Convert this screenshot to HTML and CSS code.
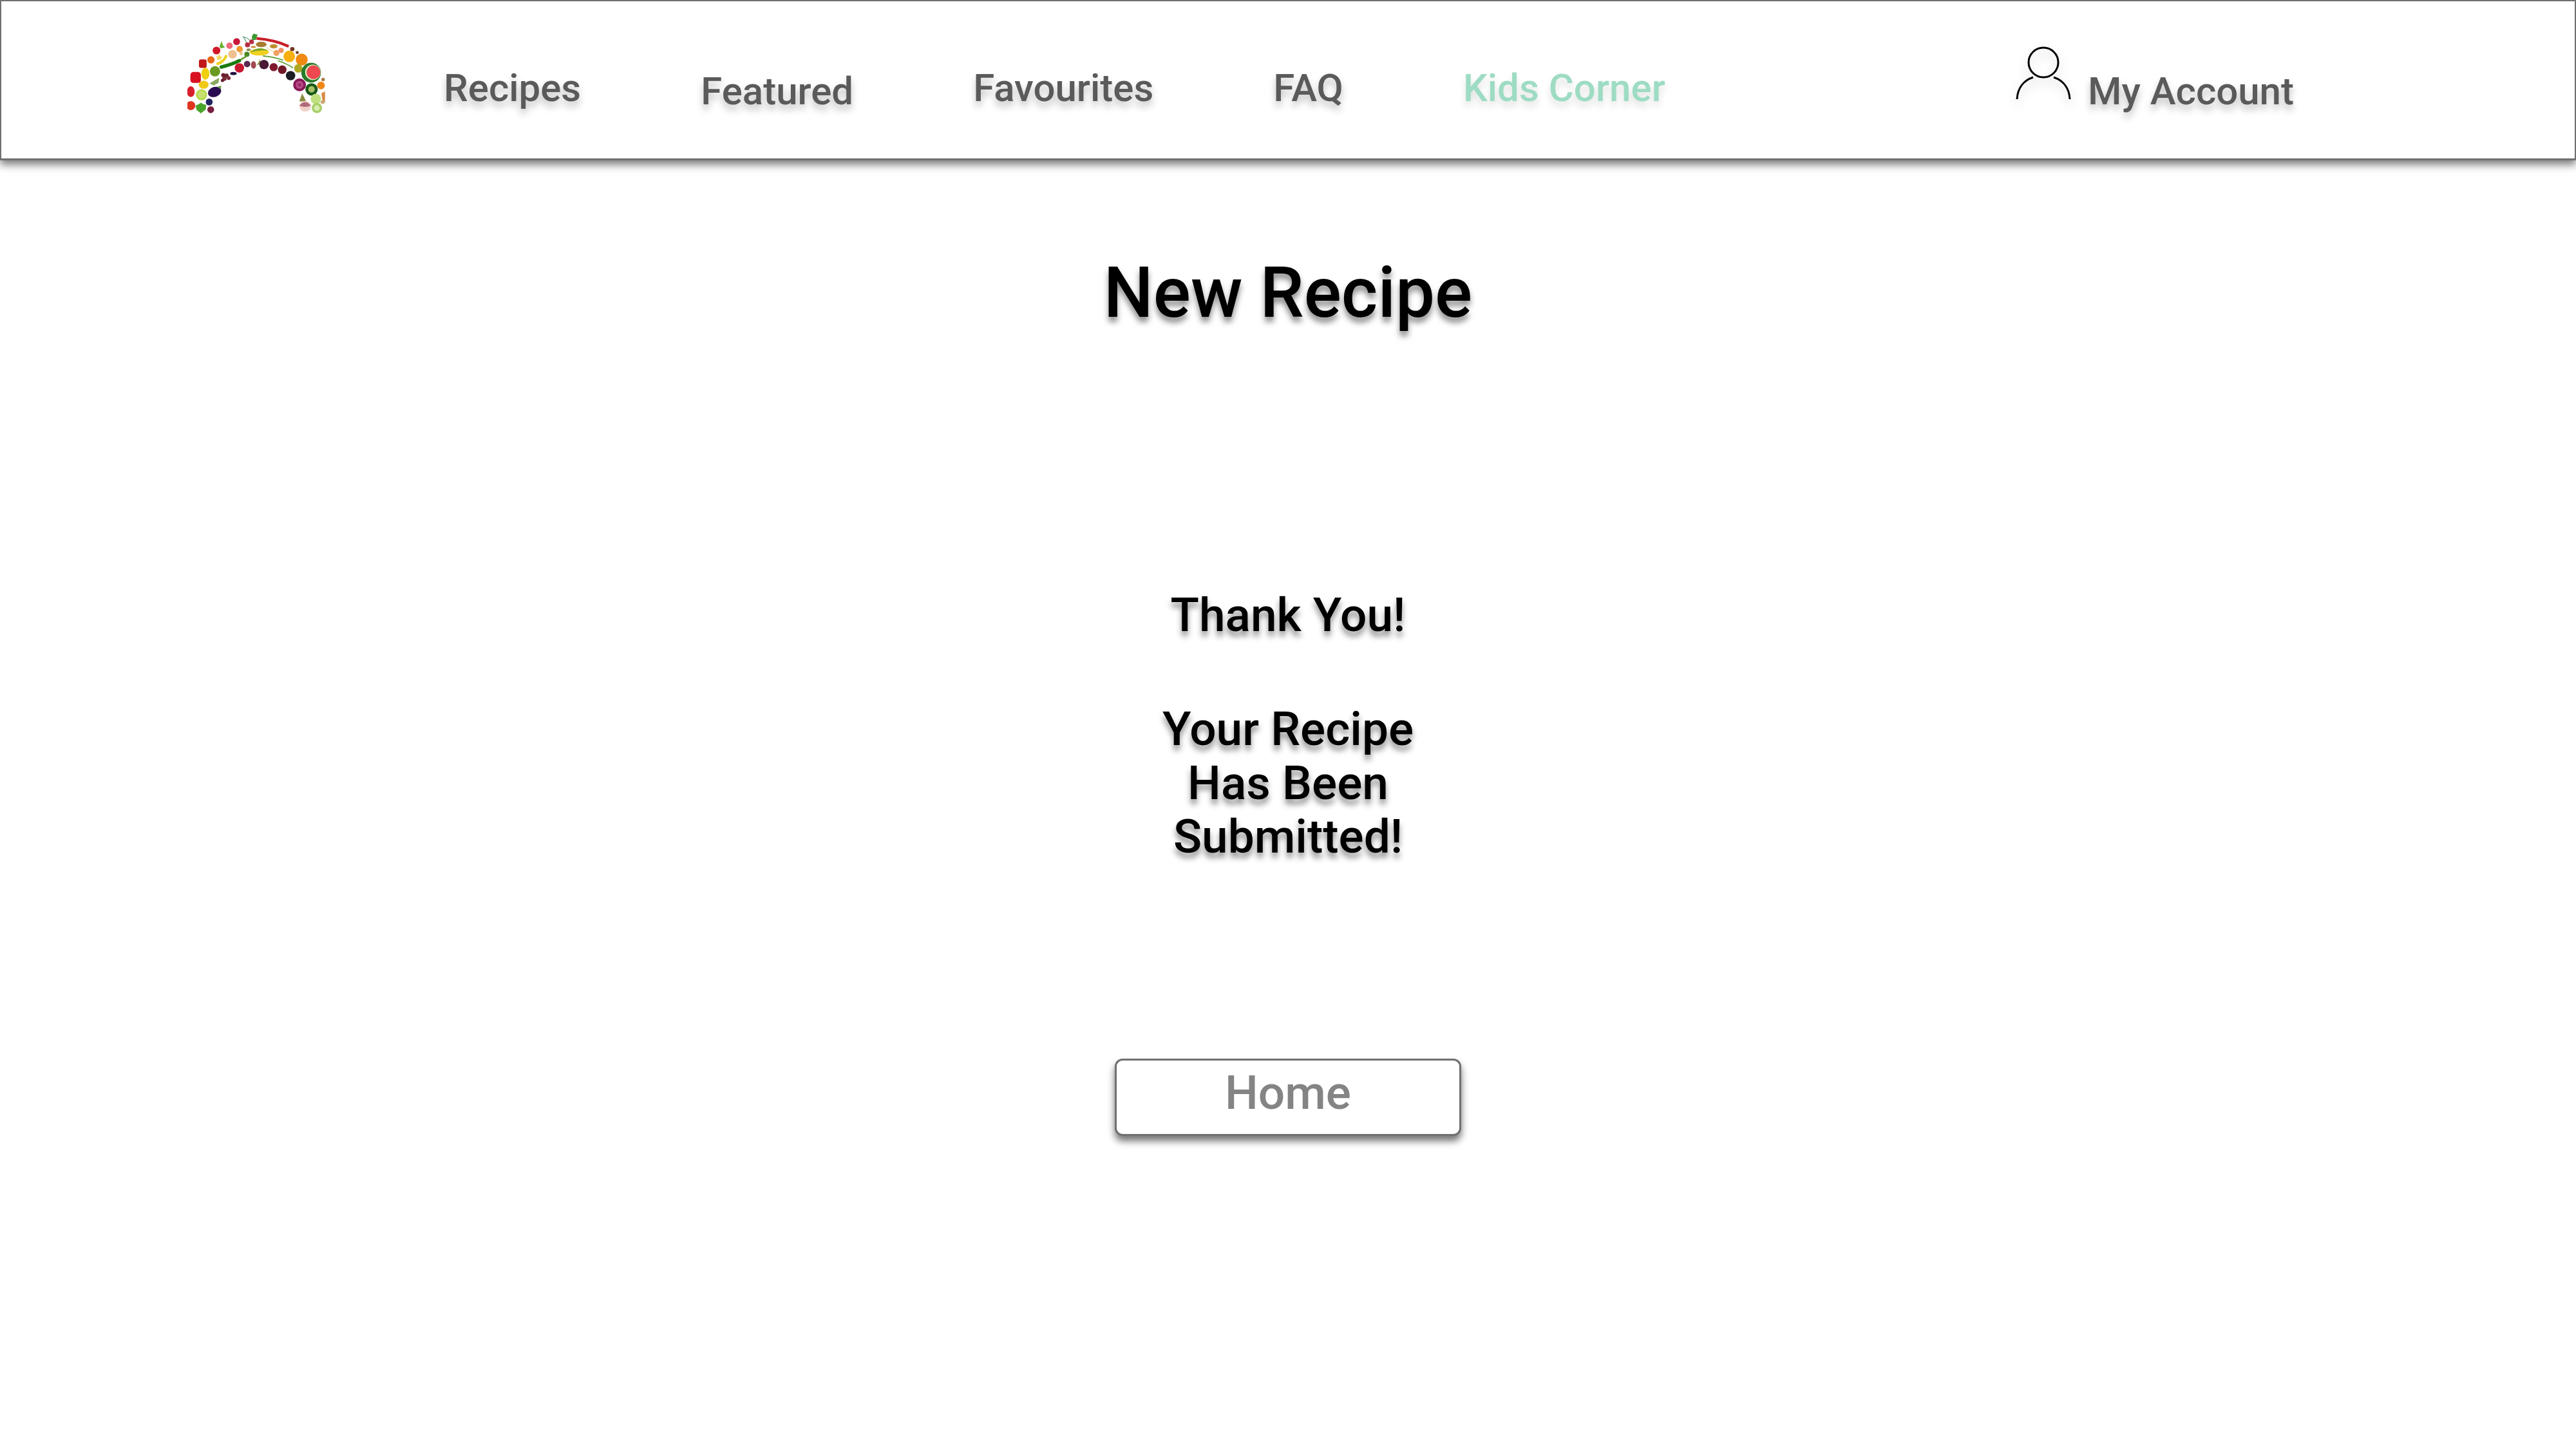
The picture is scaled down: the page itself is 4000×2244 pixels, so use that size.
FILE: index.html
```html
<!DOCTYPE html>
<html lang="en">
<head>
    <meta charset="UTF-8">
    <title>New Recipe</title>
    <link rel="stylesheet" href="styles.css">
</head>
<body>
    <header class="top-bar">
        <a class="logo" href="#">
            <svg class="logo-art" viewBox="153 95 642 373" width="214" height="124">
                <!-- left leg -->
                <ellipse cx="168" cy="367" rx="18" ry="25" fill="#d8202a"/>
                <circle cx="168" cy="432" r="21" fill="#e0351f"/>
                <path d="M190 432 L205 425 L215 418 L228 426 L240 428 L238 450 L215 468 L195 452Z" fill="#4aa52a"/>
                <circle cx="254" cy="415" r="16" fill="#1f2260"/>
                <circle cx="261" cy="451" r="16" fill="#7a2040"/>
                <circle cx="218" cy="381" r="26" fill="#b4d84a"/>
                <circle cx="218" cy="381" r="18" fill="#c8e070"/>
                <ellipse cx="279" cy="368" rx="32" ry="23" transform="rotate(-20 279 368)" fill="#2a0a50"/>
                <path d="M290 345 L310 338 L308 355 Z" fill="#6a9a40"/>
                <ellipse cx="228" cy="334" rx="23" ry="19" fill="#f0c818"/>
                <path d="M255 328 L300 302 L298 325 L275 338Z" fill="#8aa860"/>
                <rect x="166" y="275" width="49" height="51" rx="14" fill="#d81020"/>
                <ellipse cx="236" cy="283" rx="19" ry="28" fill="#f0d010"/>
                <circle cx="281" cy="272" r="24" fill="#6a9a20"/>
                <rect x="206" y="216" width="36" height="40" rx="10" fill="#c01818"/>
                <circle cx="262" cy="218" r="17" fill="#e86a18"/>
                <path d="M300 190 L306 202 L318 204 L308 212 L310 222 L300 216 L289 220 L292 210 L284 202 L295 202Z" fill="#f0d860"/>
                <path d="M288 238 Q320 232 335 197" fill="none" stroke="#f0d020" stroke-width="12"/>
                <circle cx="288" cy="175" r="18" fill="#d01828"/>
                <path d="M302 155 L312 130 L318 150 L328 160 L308 165Z" fill="#6ab030"/>
                <circle cx="349" cy="152" r="15" fill="#f06878"/>
                <circle cx="382" cy="133" r="16" fill="#c81838"/>
                <circle cx="363" cy="192" r="20" fill="#f0c090"/>
                <path d="M310 252 Q360 240 395 222" fill="none" stroke="#1a7a10" stroke-width="16" stroke-linecap="round"/>
                <!-- grapes -->
                <circle cx="320" cy="290" r="10" fill="#6a2030"/>
                <circle cx="335" cy="292" r="10" fill="#6a2030"/>
                <circle cx="345" cy="303" r="9" fill="#7a2a38"/>
                <circle cx="325" cy="306" r="10" fill="#7a2a38"/>
                <circle cx="316" cy="314" r="8" fill="#6a2030"/>
                <ellipse cx="367" cy="282" rx="15" ry="7" fill="#201040"/>
                <!-- top of the arch -->
                <circle cx="395" cy="256" r="22" fill="#c81830"/>
                <circle cx="431" cy="238" r="15" fill="#5a2a50"/>
                <ellipse cx="461" cy="242" rx="12" ry="18" fill="#a04a50"/>
                <path d="M476 245 L492 215 L495 235Z" fill="#8a9a40"/>
                <circle cx="510" cy="240" r="22" fill="#4a1838"/>
                <circle cx="555" cy="252" r="19" fill="#801830"/>
                <circle cx="595" cy="264" r="20" fill="#701828"/>
                <circle cx="634" cy="292" r="22" fill="#1c1c24"/>
                <path d="M410 110 Q435 115 445 128 M415 112 L433 145" fill="none" stroke="#2a7a50" stroke-width="3"/>
                <circle cx="433" cy="148" r="12" fill="#b83040"/>
                <circle cx="452" cy="134" r="11" fill="#b83040"/>
                <path d="M453 110 L460 96 L480 100 L472 125 L455 125Z" fill="#3a9a30"/>
                <path d="M475 118 Q560 125 625 155" fill="none" stroke="#c82028" stroke-width="13"/>
                <ellipse cx="497" cy="146" rx="25" ry="13" fill="#a87a30"/>
                <ellipse cx="555" cy="155" rx="18" ry="10" fill="#c09030"/>
                <ellipse cx="460" cy="158" rx="12" ry="5" fill="#d09040"/>
                <circle cx="396" cy="168" r="15" fill="#f09830"/>
                <circle cx="403" cy="188" r="8" fill="#e8c890"/>
                <ellipse cx="438" cy="171" rx="10" ry="6" fill="#8a8a50"/>
                <circle cx="568" cy="186" r="14" fill="#f0a060"/>
                <circle cx="590" cy="174" r="12" fill="#f09060"/>
                <ellipse cx="488" cy="182" rx="45" ry="16" fill="#f0d020"/>
                <path d="M445 182 Q490 150 530 175 Q490 172 445 182Z" fill="#7aa828"/>
                <circle cx="430" cy="192" r="12" fill="#4a8a20"/>
                <path d="M400 218 L430 200" stroke="#6a9a30" stroke-width="8"/>
                <path d="M520 160 L555 180" stroke="#f0e0c0" stroke-width="6"/>
                <path d="M505 200 Q560 205 600 220 M575 222 Q615 235 645 255" fill="none" stroke="#5a9a30" stroke-width="5"/>
                <!-- right leg -->
                <circle cx="628" cy="202" r="27" fill="#f8b010"/>
                <circle cx="686" cy="217" r="28" fill="#f08a10"/>
                <circle cx="642" cy="168" r="10" fill="#703820"/>
                <circle cx="665" cy="184" r="7" fill="#703820"/>
                <ellipse cx="670" cy="258" rx="19" ry="20" fill="#b0a820"/>
                <circle cx="730" cy="278" r="46" fill="#2a7a28"/>
                <circle cx="738" cy="276" r="36" fill="#d8ecc0"/>
                <circle cx="741" cy="276" r="32" fill="#f04850"/>
                <circle cx="676" cy="335" r="30" fill="#8a1858"/>
                <circle cx="676" cy="335" r="18" fill="#b85088"/>
                <circle cx="676" cy="335" r="9" fill="#a02a70"/>
                <circle cx="732" cy="356" r="29" fill="#1a5a18"/>
                <circle cx="732" cy="356" r="15" fill="#a8c068"/>
                <circle cx="776" cy="338" r="18" fill="#f08818"/>
                <circle cx="786" cy="310" r="8" fill="#a87a40"/>
                <circle cx="752" cy="401" r="24" fill="#c0e080"/>
                <circle cx="757" cy="443" r="24" fill="#a8d068"/>
                <circle cx="757" cy="443" r="13" fill="#d8ecb0"/>
                <path d="M778 375 L795 365 L795 415 L785 420Z" fill="#d88a40"/>
                <ellipse cx="784" cy="415" rx="10" ry="8" fill="#c8a878"/>
                <path d="M675 412 L688 375 L707 412Z" fill="#8a8a40"/>
                <ellipse cx="702" cy="435" rx="27" ry="25" fill="#f0d0c8"/>
                <path d="M675 432 Q702 400 729 432 Q702 444 675 432Z" fill="#b06878"/>
            </svg>
        </a>
        <nav class="main-nav">
            <a class="nav-link" href="#">Recipes</a>
            <a class="nav-link nav-link-low" href="#">Featured</a>
            <a class="nav-link" href="#">Favourites</a>
            <a class="nav-link" href="#">FAQ</a>
            <a class="nav-link nav-link-kids" href="#">Kids Corner</a>
        </nav>
        <a class="account" href="#">
            <svg class="account-icon" viewBox="0 0 86 86" width="86" height="86">
                <circle cx="43" cy="25" r="23" fill="none" stroke="#000" stroke-width="3"/>
                <path d="M27 48 C12 53 3 65 2 82" fill="none" stroke="#000" stroke-width="3"/>
                <path d="M59 48 C74 53 83 65 84 82" fill="none" stroke="#000" stroke-width="3"/>
            </svg>
            <span class="nav-link account-label">My Account</span>
        </a>
    </header>

    <main class="content">
        <h1 class="page-title">New Recipe</h1>
        <div class="message">
            <p class="message-head">Thank You!</p>
            <p class="message-body">Your Recipe<br>Has Been<br>Submitted!</p>
        </div>
        <button class="home-button" type="button">Home</button>
    </main>
</body>
</html>
```

FILE: styles.css
```css
html, body {
    margin: 0;
    background-color: #fff;
    font-family: 'Roboto', 'Liberation Sans', sans-serif;
}
body {
    min-height: 100vh;
}
a {
    text-decoration: none;
}
.top-bar {
    display: flex;
    align-items: flex-start;
    box-sizing: border-box;
    height: 249px;
    padding-left: 289px;
    padding-right: 436px;
    background-color: #fff;
    border: 2px solid #707070;
    border-bottom-width: 3px;
    box-shadow: 0 7px 12px rgba(0, 0, 0, 0.5);
}
.logo {
    display: block;
    margin-top: 50px;
    margin-right: 184px;
    height: 124px;
}
.logo-art {
    display: block;
}
.main-nav {
    display: flex;
    align-items: flex-start;
    gap: 186px;
    padding-top: 99px;
}
.nav-link {
    display: block;
    font-size: 60px;
    font-weight: 500;
    line-height: 72px;
    color: #5a5a5a;
    text-shadow: 0 8px 12px rgba(0, 0, 0, 0.25);
}
.nav-link-low {
    padding-top: 5px;
}
.nav-link-kids {
    color: #9ddcc3;
    text-shadow: 0 8px 12px rgba(0, 0, 0, 0.13);
}
.account {
    display: flex;
    align-items: flex-start;
    gap: 26px;
    margin-left: auto;
    padding-top: 70px;
}
.account-icon {
    display: block;
    filter: drop-shadow(0 8px 8px rgba(0, 0, 0, 0.2));
}
.account-label {
    padding-top: 34px;
}
.content {
    display: flex;
    flex-direction: column;
    align-items: center;
}
.page-title {
    margin: 143px 0 0;
    font-size: 108.5px;
    font-weight: 500;
    line-height: 126px;
    color: #000;
    text-shadow: 0 8px 10px rgba(0, 0, 0, 0.45);
}
.message {
    margin-top: 396px;
    text-align: center;
    font-size: 73px;
    font-weight: 500;
    line-height: 83.5px;
    color: #000;
    text-shadow: 0 8px 10px rgba(0, 0, 0, 0.45);
}
.message p {
    margin: 0;
}
.message-body {
    padding-top: 93.5px;
}
.home-button {
    display: block;
    box-sizing: border-box;
    width: 538px;
    height: 120px;
    margin-top: 302px;
    padding: 0 0 14px;
    font-family: inherit;
    font-size: 73px;
    font-weight: 500;
    line-height: 86px;
    color: #848484;
    text-align: center;
    background-color: #fff;
    border: 3px solid #707070;
    border-radius: 12px;
    box-shadow: 0 8px 12px rgba(0, 0, 0, 0.55);
}
```
